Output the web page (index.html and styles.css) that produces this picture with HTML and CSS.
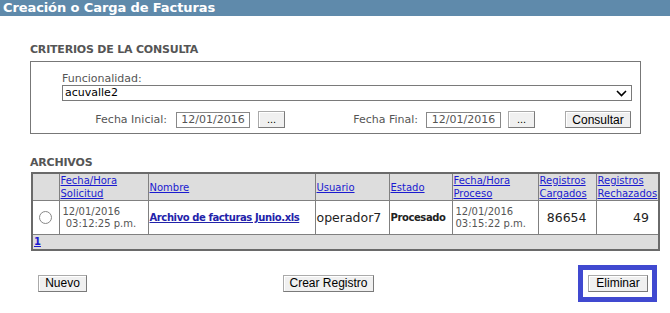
FILE: index.html
```html
<!DOCTYPE html>
<html>
<head>
<meta charset="utf-8">
<link rel="stylesheet" href="styles.css">
</head>
<body>
<div class="titlebar">Creación o Carga de Facturas</div>
<div class="content">
  <h2 class="sec-title crit">CRITERIOS DE LA CONSULTA</h2>
  <div class="criteria">
    <div class="lbl-func">Funcionalidad:</div>
    <div class="select">
      <span>acuvalle2</span>
      <svg class="chev" width="11" height="7" viewBox="0 0 11 7"><path d="M1 1 L5.5 5.5 L10 1" fill="none" stroke="#000" stroke-width="1.6"/></svg>
    </div>
    <div class="daterow">
      <span class="dlabel d1">Fecha Inicial:</span>
      <span class="dinput">12/01/2016</span>
      <span class="btn dots">...</span>
      <span class="dlabel d2">Fecha Final:</span>
      <span class="dinput d2in">12/01/2016</span>
      <span class="btn dots">...</span>
      <span class="btn consultar">Consultar</span>
    </div>
  </div>
  <h2 class="sec-title arch">ARCHIVOS</h2>
  <table class="grid">
    <colgroup>
      <col class="c1"><col class="c2"><col class="c3"><col class="c4"><col class="c5"><col class="c6"><col class="c7"><col class="c8">
    </colgroup>
    <tr class="head">
      <td></td>
      <td><a>Fecha/Hora<br>Solicitud</a></td>
      <td><a>Nombre</a></td>
      <td><a>Usuario</a></td>
      <td><a>Estado</a></td>
      <td><a>Fecha/Hora<br>Proceso</a></td>
      <td><a>Registros<br>Cargados</a></td>
      <td><a>Registros<br>Rechazados</a></td>
    </tr>
    <tr class="data">
      <td class="radio-cell"><span class="radio"></span></td>
      <td class="date">12/01/2016<br>&nbsp;03:12:25 p.m.</td>
      <td class="name"><a>Archivo de facturas Junio.xls</a></td>
      <td class="big">operador7</td>
      <td class="estado">Procesado</td>
      <td class="date">12/01/2016<br>03:15:22 p.m.</td>
      <td class="big num">86654</td>
      <td class="big num">49</td>
    </tr>
    <tr class="foot">
      <td colspan="8"><a>1</a></td>
    </tr>
  </table>
  <div class="actions">
    <span class="btn nuevo">Nuevo</span>
    <span class="btn crear">Crear Registro</span>
    <span class="focusbox"><span class="btn eliminar">Eliminar</span></span>
  </div>
</div>
</body>
</html>
```
FILE: styles.css
```css
html, body { margin: 0; padding: 0; background: #fff; }
body { font-family: "DejaVu Sans", Verdana, sans-serif; font-size: 11px; color: #555; width: 670px; height: 313px; overflow: hidden; }

.titlebar {
  height: 16px;
  background: #5f8aab;
  color: #fff;
  font-weight: bold;
  font-size: 13px;
  line-height: 15px;
  padding-left: 3px;
  white-space: nowrap;
  letter-spacing: -0.1px;
}

.content { padding-left: 30px; }

.sec-title {
  margin: 0;
  font-size: 11px;
  font-weight: bold;
  color: #555;
  line-height: 13px;
  letter-spacing: -0.2px;
}
.crit { padding-top: 27px; height: 18px; }
.arch { padding-top: 22px; height: 16px; }

.criteria {
  height: 71px;
  border: 1px solid #777;
  padding-left: 31px;
  box-sizing: content-box;
  width: 578px;
}
.lbl-func { margin-top: 10px; height: 13px; line-height: 13px; color: #555; }
.select {
  display: flex;
  align-items: center;
  justify-content: space-between;
  height: 14px;
  border: 1px solid #7a7a7a;
  color: #000;
  padding-left: 2px;
  box-sizing: content-box;
  width: 566px;
  line-height: 14px;
}
.chev { margin-right: 4px; }

.daterow {
  display: flex;
  align-items: center;
  margin-top: 10px;
  height: 17px;
}
.dlabel { text-align: right; color: #555; }
.d1 { width: 105px; margin-right: 9px; }
.d2 { width: 133px; margin-right: 8px; }
.dinput {
  width: 72px;
  height: 14px;
  border: 1px solid #888;
  text-align: center;
  line-height: 14px;
  color: #555;
  margin-right: 8px;
}
.d2in { width: 73px; margin-right: 7px; }

.btn {
  display: inline-flex;
  align-items: center;
  justify-content: center;
  box-sizing: border-box;
  height: 17px;
  background: #f0f0f0;
  border: 1px solid #7a7a7a;
  border-top-color: #aaa;
  border-left-color: #aaa;
  box-shadow: inset 1px 1px 0 #fff;
  color: #000;
  font-family: "Liberation Sans", Arial, sans-serif;
  font-size: 12px;
}
.dots { width: 27px; font-size: 11px; line-height: 10px; align-items: flex-end; padding-bottom: 3px; }
.consultar { width: 66px; margin-left: 30px; }

.grid {
  border-collapse: collapse;
  width: 627px;
  margin-left: 1px;
  table-layout: fixed;
  border: 2px solid #6a6a6a;
}
.grid td { border: 1px solid #808080; padding: 0 1px; vertical-align: middle; white-space: nowrap; overflow: hidden; }
.c1 { width: 27px; } .c2 { width: 89px; } .c3 { width: 167px; } .c4 { width: 74px; }
.c5 { width: 63px; } .c6 { width: 86px; } .c7 { width: 58px; } .c8 { width: 63px; }
.grid a { color: #1a1ad0; text-decoration: underline; }
.head { background: #ddd; height: 27px; }
.head td { line-height: 13px; font-size: 10px; }
.data { height: 34px; background: #fff; }
.date { line-height: 12px; padding-left: 3px !important; color: #555; font-size: 10px; }
.name a { font-weight: bold; color: #2222aa; font-size: 10px; letter-spacing: -0.4px; }
.big { font-size: 12.5px; color: #222; }
.estado { font-weight: bold; color: #222; font-size: 10px; letter-spacing: -0.4px; }
.num { text-align: right; padding-right: 9px !important; }
.radio-cell { text-align: center; }
.radio {
  display: inline-block;
  width: 11px; height: 11px;
  border: 1px solid #888;
  border-radius: 50%;
  background: #fff;
  vertical-align: middle;
}
.foot { background: #ddd; height: 15px; }
.foot td { line-height: 13px; font-weight: bold; font-size: 10px; }

.actions {
  display: flex;
  align-items: center;
  margin-top: 14px;
  height: 37px;
}
.nuevo { width: 49px; margin-left: 8px; }
.crear { width: 91px; margin-left: 196px; }
.focusbox {
  margin-left: 204px;
  border: 5px solid #4049d0;
  padding: 5px 4px 5px 5px;
  display: inline-flex;
}
.eliminar { width: 60px; }
```
